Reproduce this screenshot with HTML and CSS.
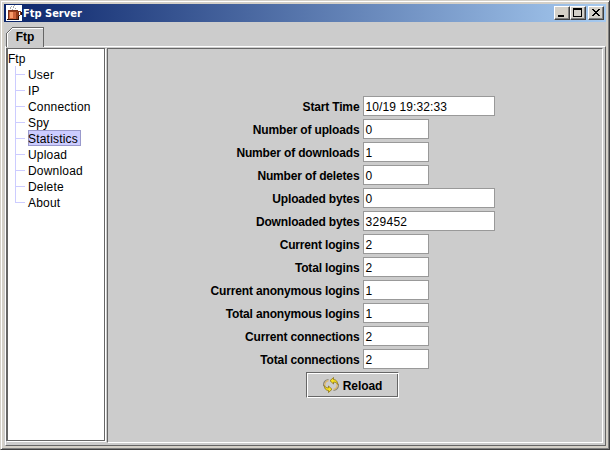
FILE: index.html
```html
<!DOCTYPE html>
<html lang="en">
<head>
<meta charset="utf-8">
<title>Ftp Server</title>
<link rel="stylesheet" href="styles.css">
</head>
<body>
<div class="window">
  <header class="titlebar">
    <svg class="cup" width="16" height="16" viewBox="0 0 16 16" shape-rendering="crispEdges">
      <path fill="#fff" d="M0 0h16v16H0z"/>
      <path fill="#aaa" d="M5 1h1v1H5zM8 0h1v1H8zM7 1h1v2H7zM4 2h1v2H4zM9 3h1v1H9zM6 4h1v1H6z"/>
      <path fill="#7b3018" d="M2 5h10v1H2zM2 6h1v8H2zM12 6h3v1h-3zM14 7h1v3h-1zM12 10h2v1h-2zM12 7h1v3h-1z"/>
      <path fill="#ce6339" d="M3 6h9v8H3z"/>
      <path fill="#f79c6b" d="M4 7h3v6H4z"/>
      <path fill="#943c18" d="M10 7h2v7h-2zM3 6h9v1H3z"/>
      <path fill="#291008" d="M1 14h12v1H1zM12 11h1v3h-1zM15 7h1v3h-1z"/>
    </svg>
    <span class="title">Ftp Server</span>
    <div class="controls">
      <button class="ctl" aria-label="Minimize"><svg width="14" height="12" shape-rendering="crispEdges"><path d="M3 8h6v2H3z"/></svg></button>
      <button class="ctl" aria-label="Maximize"><svg width="14" height="12" shape-rendering="crispEdges"><path fill-rule="evenodd" d="M2 1h9v9H2zM3 3v6h7V3z"/></svg></button>
      <button class="ctl close" aria-label="Close"><svg width="14" height="12" shape-rendering="crispEdges"><path d="M3 2h2v1h1v1h2V3h1V2h2v1h-1v1H9v1H8v1h1v1h1v1h1v1H9V8H8V7H6v1H5v1H3V8h1V7h1V6h1V5H5V4H4V3H3z"/></svg></button>
    </div>
  </header>
  <div class="client">
    <div class="tabs">
      <div class="tab">
        <svg class="tab-edge" width="38" height="20" shape-rendering="crispEdges">
          <path fill="#666" d="M6 0h32v20h-1V1H6zM5 1h1v1H5zM4 2h1v1H4zM3 3h1v1H3zM2 4h1v1H2zM1 5h1v1H1zM0 6h1v14H0z"/>
          <path fill="#fff" d="M6 1h31v1H6zM5 2h1v1H5zM4 3h1v1H4zM3 4h1v1H3zM2 5h1v1H2zM1 6h1v14H1z"/>
        </svg>
        <span>Ftp</span>
      </div>
    </div>
    <div class="pane">
      <nav class="tree">
        <div class="root">Ftp</div>
        <ul>
          <li><span>User</span></li>
          <li><span>IP</span></li>
          <li><span>Connection</span></li>
          <li><span>Spy</span></li>
          <li><span class="selected">Statistics</span></li>
          <li><span>Upload</span></li>
          <li><span>Download</span></li>
          <li><span>Delete</span></li>
          <li><span>About</span></li>
        </ul>
      </nav>
      <main class="stats">
        <div class="form">
          <label>Start Time</label><output class="wide date">10/19 19:32:33</output>
          <label>Number of uploads</label><output>0</output>
          <label>Number of downloads</label><output>1</output>
          <label>Number of deletes</label><output>0</output>
          <label>Uploaded bytes</label><output class="wide">0</output>
          <label>Downloaded bytes</label><output class="wide">329452</output>
          <label>Current logins</label><output>2</output>
          <label>Total logins</label><output>2</output>
          <label>Current anonymous logins</label><output>1</output>
          <label>Total anonymous logins</label><output>1</output>
          <label>Current connections</label><output>2</output>
          <label>Total connections</label><output>2</output>
        </div>
        <button class="reload">
          <svg width="16" height="16" viewBox="0 0 16 16">
            <path fill="none" stroke="#8a8474" stroke-width="1.200" d="M5.500 2.500C2 2.800 0 5.500 .8 9M10.500 13.500C14 13.200 16 10.500 15.200 7"/>
            <path fill="none" stroke="#e0b860" stroke-width="1.200" d="M5.500 3.700C3 4 1.300 6.500 2 9M10.500 12.300C13 12 14.700 9.500 14 7"/>
            <path fill="#f7e020" stroke="#80650c" stroke-width=".7" d="M7 3.700L10.500.5v2c2.500 0 4.300 2 4.300 5-1.200-2-2.500-2.500-4.300-2.300v1.800zM9 12.300l-3.500 3.200v-2C3 13.500 1.200 11.500 1.200 8.500c1.200 2 2.500 2.500 4.300 2.300V9z"/>
          </svg>
          <span>Reload</span>
        </button>
      </main>
    </div>
  </div>
</div>
</body>
</html>
```
FILE: styles.css
```css
* { box-sizing: border-box; }
body { margin: 0; font: 12px/16px "Liberation Sans", Arial, sans-serif; color: #000; }
.window {
  width: 610px; height: 450px; padding: 3px; background: #d4d0c8;
  border: 1px solid; border-color: #d4d0c8 #404040 #404040 #d4d0c8;
  box-shadow: inset 1px 1px #fff, inset -1px -1px #808080;
  display: flex; flex-direction: column;
}
.titlebar {
  height: 18px; display: flex; align-items: center; padding: 0 2px;
  background: linear-gradient(90deg, #0a246a, #a6caf0);
}
.title { margin-left: 1px; padding-top: 1px; color: #fff; font: bold 11px/16px "DejaVu Sans Condensed", "DejaVu Sans", sans-serif; }
.controls { margin-left: auto; display: flex; }
.ctl {
  width: 16px; height: 14px; padding: 0; border: 1px solid; border-color: #fff #404040 #404040 #fff;
  background: #d4d0c8; box-shadow: inset -1px -1px #808080; display: block;
}
.ctl svg { display: block; }
.close { margin-left: 2px; }
.client { flex: 1; background: #ccc; display: flex; flex-direction: column; padding: 5px 0 0 1px; }
.tabs { height: 19px; padding-left: 1px; }
.tab {
  width: 38px; height: 20px; position: relative; z-index: 1; background: #ccc;
  text-align: center; font-weight: bold; line-height: 20px; letter-spacing: -.1px;
}
.tab-edge { position: absolute; left: 0; top: 0; }
.pane {
  flex: 1; display: flex; border: 1px solid; border-color: #fff #666 #666 #fff; padding: 1px 2px 2px 0;
}
.tree {
  width: 99px; border: solid #666; border-width: 1px 1px 1px 2px; background: #fff;
  box-shadow: 1px 1px #fff; margin-bottom: 2px; padding-top: 1px; line-height: 18px;
}
.root { height: 16px; }
.tree ul { list-style: none; margin: 0; padding: 0 0 0 7px; }
.tree li { position: relative; height: 16px; padding-left: 13px; white-space: nowrap; }
.tree li::before { content: ""; position: absolute; left: 0; top: 0; width: 1px; height: 16px; background: #ccf; }
.tree li:last-child::before { height: 9px; }
.tree li::after { content: ""; position: absolute; left: 0; top: 8px; width: 10px; height: 1px; background: #ccf; }
.tree li span { display: block; width: max-content; height: 16px; letter-spacing: .2px; }
.tree li .selected { width: 53px; background: #ccf; box-shadow: inset 0 0 0 1px #99c; }
.stats {
  flex: 1; margin-left: 2px; border: 1px solid; border-color: #666 #fff #fff #666;
  padding-top: 47px; display: flex; flex-direction: column;
}
.form { display: grid; grid-template-columns: 252px 132px; column-gap: 3px; row-gap: 3px; align-items: center; }
.form label { text-align: right; font-weight: bold; height: 20px; line-height: 22px; letter-spacing: -.16px; padding-right: .6px; }
.form output { width: 66px; height: 20px; border: 1px solid #999; background: #fff; padding: 0 1.5px; line-height: 20px; letter-spacing: .3px; }
.form .wide { width: 132px; }
.form .date { letter-spacing: .1px; }
.reload {
  width: 93px; height: 26px; margin: 3px 0 0 198px; padding: 0; background: #ccc;
  border: 1px solid; border-color: #666 #fff #fff #666; box-shadow: inset 1px 1px #fff, inset -1px -1px #666;
  display: flex; align-items: center; justify-content: center; gap: 4px; color: #000;
  font: bold 12px/16px "Liberation Sans", Arial, sans-serif; letter-spacing: -.1px;
}
.reload span { padding-top: 1px; }
```
